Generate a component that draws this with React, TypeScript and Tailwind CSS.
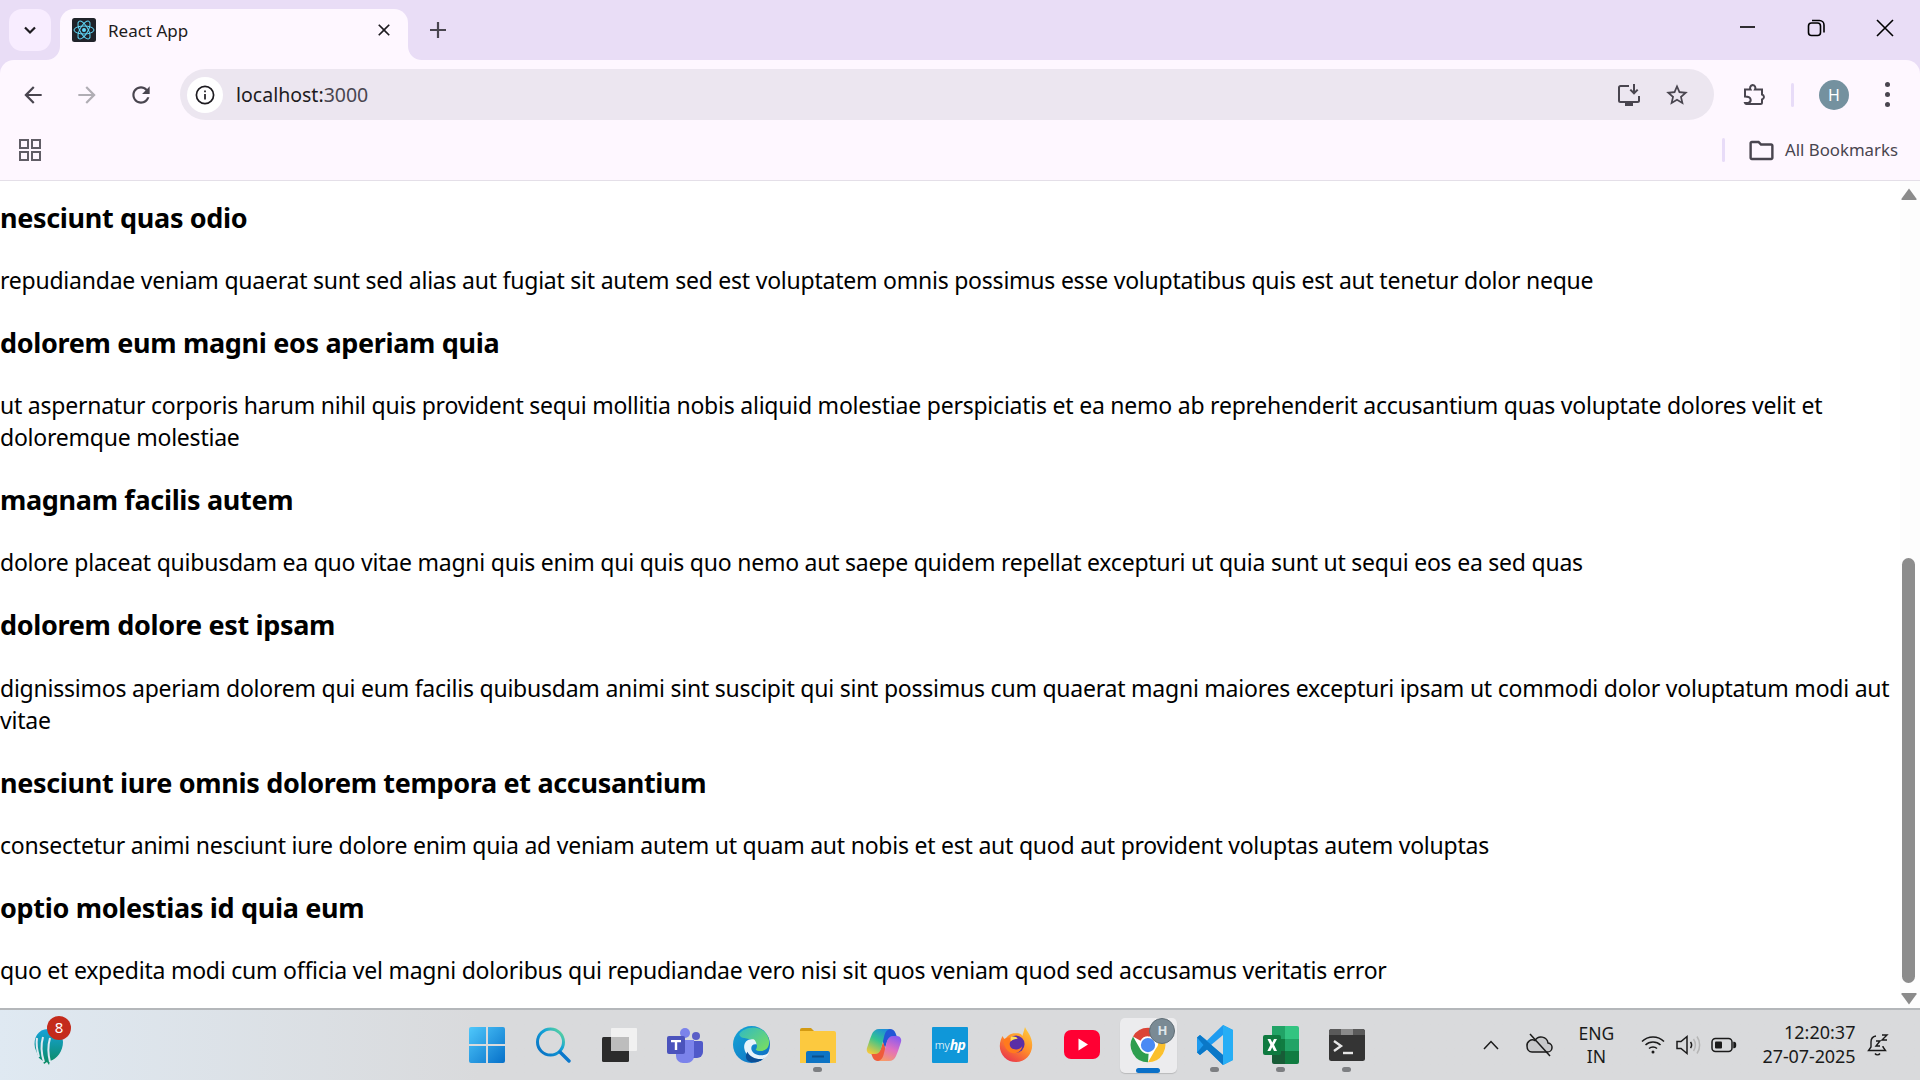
import type { ReactNode } from "react";

const posts: { title: string; body: ReactNode }[] = [
  {
    title: "nesciunt quas odio",
    body: "repudiandae veniam quaerat sunt sed alias aut fugiat sit autem sed est voluptatem omnis possimus esse voluptatibus quis est aut tenetur dolor neque",
  },
  {
    title: "dolorem eum magni eos aperiam quia",
    body: "ut aspernatur corporis harum nihil quis provident sequi mollitia nobis aliquid molestiae perspiciatis et ea nemo ab reprehenderit accusantium quas voluptate dolores velit et doloremque molestiae",
  },
  {
    title: "magnam facilis autem",
    body: "dolore placeat quibusdam ea quo vitae magni quis enim qui quis quo nemo aut saepe quidem repellat excepturi ut quia sunt ut sequi eos ea sed quas",
  },
  {
    title: "dolorem dolore est ipsam",
    body: "dignissimos aperiam dolorem qui eum facilis quibusdam animi sint suscipit qui sint possimus cum quaerat magni maiores excepturi ipsam ut commodi dolor voluptatum modi aut vitae",
  },
  {
    title: "nesciunt iure omnis dolorem tempora et accusantium",
    body: "consectetur animi nesciunt iure dolore enim quia ad veniam autem ut quam aut nobis et est aut quod aut provident voluptas autem voluptas",
  },
  {
    title: "optio molestias id quia eum",
    body: "quo et expedita modi cum officia vel magni doloribus qui repudiandae vero nisi sit quos veniam quod sed accusamus veritatis error",
  },
];

function Mat({ d, size = 24, className = "" }: { d: string; size?: number; className?: string }) {
  return (
    <svg width={size} height={size} viewBox="0 0 24 24" className={className} fill="currentColor">
      <path d={d} />
    </svg>
  );
}

const BACK = "M20 11H7.83l5.59-5.59L12 4l-8 8 8 8 1.41-1.41L7.83 13H20v-2z";
const FORWARD = "M4 11h12.17l-5.59-5.59L12 4l8 8-8 8-1.41-1.41L16.17 13H4v-2z";
const RELOAD =
  "M17.65 6.35C16.2 4.9 14.21 4 12 4c-4.42 0-7.99 3.58-7.99 8s3.57 8 7.99 8c3.73 0 6.84-2.55 7.73-6h-2.08c-.82 2.33-3.04 4-5.65 4-3.31 0-6-2.69-6-6s2.69-6 6-6c1.66 0 3.14.69 4.22 1.78L13 11h7V4l-2.35 2.35z";
const CLOSE =
  "M19 6.41 17.59 5 12 10.59 6.41 5 5 6.41 10.59 12 5 17.59 6.41 19 12 13.41 17.59 19 19 17.59 13.41 12z";
const STAR =
  "M22 9.24l-7.19-.62L12 2 9.19 8.63 2 9.24l5.46 4.73L5.82 21 12 17.27 18.18 21l-1.63-7.03L22 9.24zM12 15.4l-3.76 2.27 1-4.28-3.32-2.88 4.38-.38L12 6.1l1.71 4.04 4.38.38-3.32 2.88 1 4.28L12 15.4z";
const FOLDER =
  "M20 6h-8l-2-2H4c-1.1 0-2 .9-2 2v12c0 1.1.9 2 2 2h16c1.1 0 2-.9 2-2V8c0-1.1-.9-2-2-2zm0 12H4V6h5.17l2 2H20v10z";

function ReactFavicon() {
  return (
    <svg width="24" height="24" viewBox="0 0 24 24">
      <rect width="24" height="24" rx="2.5" fill="#20232a" />
      <g fill="none" stroke="#61dafb" strokeWidth="1">
        <ellipse cx="12" cy="12" rx="10" ry="4" />
        <ellipse cx="12" cy="12" rx="10" ry="4" transform="rotate(60 12 12)" />
        <ellipse cx="12" cy="12" rx="10" ry="4" transform="rotate(120 12 12)" />
      </g>
      <circle cx="12" cy="12" r="2" fill="#61dafb" />
    </svg>
  );
}

function Flare({ side }: { side: "left" | "right" }) {
  return side === "left" ? (
    <svg width="14" height="14" viewBox="0 0 14 14" className="absolute bottom-0 left-[-14px]">
      <path d="M14 0v14H0C8 14 14 8 14 0z" fill="#fef7ff" />
    </svg>
  ) : (
    <svg width="14" height="14" viewBox="0 0 14 14" className="absolute bottom-0 right-[-14px]">
      <path d="M0 0v14h14C6 14 0 8 0 0z" fill="#fef7ff" />
    </svg>
  );
}

function TabStrip() {
  return (
    <div className="flex h-[60px] shrink-0 items-start bg-[#e9ddf6] pl-[9px] pt-[9px]">
      <div className="flex h-[42px] w-[42px] items-center justify-center rounded-[13px] bg-[#f8edff] text-[#1d1b20]">
        <svg width="16" height="16" viewBox="0 0 16 16" fill="none" stroke="currentColor" strokeWidth="2.2">
          <path d="M3 5.5l5 5 5-5" />
        </svg>
      </div>
      <div className="relative ml-[9px] flex h-[51px] w-[348px] items-center rounded-t-[14px] bg-[#fef7ff] pb-[9px] pl-[12px] pr-[14px]">
        <Flare side="left" />
        <Flare side="right" />
        <ReactFavicon />
        <span className="ml-[12px] mt-[2px] flex-1 text-[17px] text-[#1d1b20]">React App</span>
        <Mat d={CLOSE} size={20} className="text-[#1d1b20]" />
      </div>
      <div className="ml-[16px] mt-[7px] text-[#49454f]">
        <svg width="28" height="28" viewBox="0 0 28 28" fill="none" stroke="currentColor" strokeWidth="2.2">
          <path d="M14 6v16M6 14h16" />
        </svg>
      </div>
      <div className="ml-auto mt-[9px] flex w-[183px] items-center text-black">
        <svg width="22" height="22" viewBox="0 0 22 22" fill="none" stroke="currentColor" strokeWidth="1.6" className="mt-[-4px]">
          <path d="M3 11h15" />
        </svg>
        <svg width="22" height="22" viewBox="0 0 22 22" fill="none" stroke="currentColor" strokeWidth="1.6" className="ml-[46px] mt-[-1px]">
          <rect x="3.5" y="6" width="12" height="12.5" rx="3" />
          <path d="M7 3.5h7.5a4.5 4.5 0 0 1 4.5 4.5v7.5" />
        </svg>
        <svg width="22" height="22" viewBox="0 0 22 22" fill="none" stroke="currentColor" strokeWidth="1.6" className="ml-[47px] mt-[-1px]">
          <path d="M3 3l16 16M19 3L3 19" />
        </svg>
      </div>
    </div>
  );
}

function Toolbar() {
  return (
    <div className="flex h-[60px] shrink-0 items-center rounded-t-[14px] bg-[#fef7ff] pl-[20px] pt-[9px]">
      <Mat d={BACK} size={26} className="text-[#49454f]" />
      <Mat d={FORWARD} size={26} className="ml-[28px] text-[#b0adb4]" />
      <Mat d={RELOAD} size={26} className="ml-[28px] text-[#49454f]" />
      <div className="ml-[26px] flex h-[51px] w-[1534px] items-center rounded-full bg-[#ece6f0] pl-[7px] pr-[24px]">
        <div className="flex h-[36px] w-[36px] items-center justify-center rounded-full bg-white text-[#1d1b20]">
          <svg width="20" height="20" viewBox="0 0 20 20" fill="none" stroke="currentColor" strokeWidth="1.7">
            <circle cx="10" cy="10" r="8.6" />
            <path d="M10 9v5.5M10 5.5v1.8" />
          </svg>
        </div>
        <span className="ml-[13px] flex-1 text-[19.5px] text-[#1d1b20]">
          localhost:<span className="text-[#49454f]">3000</span>
        </span>
        <svg width="26" height="26" viewBox="0 0 26 26" fill="none" stroke="#49454f" strokeWidth="2" className="mr-[22px]">
          <path d="M13 4H4.5A1.5 1.5 0 0 0 3 5.5v13A1.5 1.5 0 0 0 4.5 20h17a1.5 1.5 0 0 0 1.5-1.5V14" />
          <path d="M18 2v9M14.3 7.6L18 11.3l3.7-3.7" />
          <path d="M9 22.5h8" strokeWidth="3" />
        </svg>
        <Mat d={STAR} size={26} className="text-[#49454f]" />
      </div>
      <svg width="26" height="26" viewBox="0 0 26 26" fill="none" stroke="#49454f" strokeWidth="2" className="ml-[28px]">
        <path d="M3 7.5h5.5a3 3 0 0 1 2-4.5 3 3 0 0 1 2.5 4.5h7v5a3 3 0 0 1 2 2.5 3 3 0 0 1-2 2.5v3a1.5 1.5 0 0 1-1.5 1.500H4.500A1.500 1.500 0 0 1 3 21h3.500c2-1 2.500-2.500 2-4-.5-1.500-2.500-2.500-5.500-2.500z" />
      </svg>
      <div className="ml-[23px] h-[24px] w-[3px] rounded-full bg-[#e8dcf8]" />
      <div className="ml-[25px] flex h-[30px] w-[30px] items-center justify-center rounded-full bg-[#74919f] text-[16px] text-white">
        H
      </div>
      <div className="ml-[36px] flex flex-col gap-[5px]">
        <span className="h-[5px] w-[5px] rounded-full bg-[#49454f]" />
        <span className="h-[5px] w-[5px] rounded-full bg-[#49454f]" />
        <span className="h-[5px] w-[5px] rounded-full bg-[#49454f]" />
      </div>
    </div>
  );
}

function BookmarksBar() {
  return (
    <div className="flex h-[61px] shrink-0 items-center border-b border-[#e4dfe8] bg-[#fef7ff] pl-[19px]">
      <svg width="22" height="22" viewBox="0 0 22 22" fill="none" stroke="#605d66" strokeWidth="2">
        <rect x="1" y="1" width="8" height="8" />
        <rect x="13" y="1" width="8" height="8" />
        <rect x="1" y="13" width="8" height="8" />
        <rect x="13" y="13" width="8" height="8" />
      </svg>
      <div className="ml-auto h-[24px] w-[3px] rounded-full bg-[#e8dcf8]" />
      <Mat d={FOLDER} size={29} className="ml-[22px] text-[#49454f]" />
      <span className="ml-[9px] mr-[21px] w-[114px] whitespace-nowrap text-[16.8px] text-[#49454f]">All Bookmarks</span>
    </div>
  );
}

function Scrollbar() {
  return (
    <div className="flex w-[20px] shrink-0 flex-col items-center bg-[#fdfdfd] pr-[3px] pt-[7px]">
      <svg width="16" height="12" viewBox="0 0 16 12" fill="#8b8b8b" className="shrink-0">
        <path d="M8 .5l7.5 10.2c.3.6 0 1.3-.7 1.3H1.200c-.7 0-1-.7-.7-1.300z" />
      </svg>
      <div className="mt-[358px] h-[425px] w-[13px] shrink-0 rounded-[7px] bg-[#8c8c8c]" />
      <svg width="16" height="12" viewBox="0 0 16 12" fill="#8b8b8b" className="mt-[10px] shrink-0">
        <path d="M8 11.500L.5 1.300C.2.700.5 0 1.200 0h13.600c.7 0 1 .7.7 1.300z" />
      </svg>
    </div>
  );
}

function WindowsLogo() {
  return (
    <svg width="36" height="36" viewBox="0 0 36 36">
      <defs>
        <linearGradient id="win" x1="0" y1="0" x2="1" y2="1">
          <stop offset="0" stopColor="#4fc8fb" />
          <stop offset="1" stopColor="#0670c9" />
        </linearGradient>
      </defs>
      <path d="M2 0h15v17H0V2a2 2 0 0 1 2-2zM19 0h15a2 2 0 0 1 2 2v15H19zM0 19h17v17H2a2 2 0 0 1-2-2zM19 19h17v15a2 2 0 0 1-2 2H19z" fill="url(#win)" />
    </svg>
  );
}

function SearchIcon() {
  return (
    <svg width="36" height="36" viewBox="0 0 36 36" fill="none">
      <defs>
        <linearGradient id="srch" x1="0" y1="1" x2="1" y2="0">
          <stop offset="0" stopColor="#0669c1" />
          <stop offset="0.6" stopColor="#12a3d8" />
          <stop offset="1" stopColor="#6ee08e" />
        </linearGradient>
      </defs>
      <circle cx="15.500" cy="15" r="13" stroke="url(#srch)" strokeWidth="3" />
      <path d="M25 25l9 9" stroke="#0b78cc" strokeWidth="3.400" strokeLinecap="round" />
    </svg>
  );
}

function TaskViewIcon() {
  return (
    <svg width="36" height="36" viewBox="0 0 36 36">
      <rect x="1" y="10" width="27" height="25" rx="1.500" fill="#2b2b2b" />
      <rect x="10" y="1" width="26" height="23" rx="1" fill="#f4f4f4" fillOpacity="0.85" />
      <rect x="10" y="10" width="18" height="14" fill="#bdbdbd" />
    </svg>
  );
}

function TeamsIcon() {
  return (
    <svg width="38" height="36" viewBox="0 0 38 36">
      <circle cx="30" cy="9" r="4" fill="#5b5fc7" />
      <circle cx="19" cy="6" r="5" fill="#7b83eb" />
      <path d="M26 14h9a2 2 0 0 1 2 2v9a6 6 0 0 1-6 6h-5z" fill="#5059c9" />
      <path d="M10 13h18v16a7 7 0 0 1-7 7h-4a7 7 0 0 1-7-7z" fill="#7b83eb" />
      <rect x="1" y="9" width="18" height="18" rx="2" fill="#4b53bc" />
      <path d="M5 13h10v2.200h-3.800V23H8.800v-7.800H5z" fill="#fff" />
    </svg>
  );
}

function EdgeIcon() {
  return (
    <svg width="37" height="37" viewBox="0 0 36 36">
      <defs>
        <linearGradient id="edgeA" x1="0" y1="0" x2="1" y2="1">
          <stop offset="0" stopColor="#14a6d6" />
          <stop offset="1" stopColor="#0f6bc3" />
        </linearGradient>
        <linearGradient id="edgeB" x1="0" y1="0" x2="1" y2="1">
          <stop offset="0" stopColor="#2fb9c4" />
          <stop offset="1" stopColor="#7ee05a" />
        </linearGradient>
      </defs>
      <circle cx="18" cy="18" r="18" fill="url(#edgeA)" />
      <path d="M6 8C10 1 25-2 32 7c4 5 4 12 1 15-3 3-9 3-11 1 2-2 2-7-2-9-6-3-13-1-14-6z" fill="url(#edgeB)" />
      <path d="M20 13c-6-1-10 3-9 9 1 7 9 13 18 10 2-1 5-3 6-6-5 4-15 3-17-3-1-4 2-6 5-5-.5-2-1.500-4.500-3-5z" fill="#fff" fillOpacity="0.9" />
      <path d="M14 25c2 5 9 8 15 7-3 3-8 4-12 3-4-1-6-5-3-10z" fill="#0c4f96" />
    </svg>
  );
}

function ExplorerIcon() {
  return (
    <svg width="36" height="36" viewBox="0 0 36 36">
      <path d="M0 3a2 2 0 0 1 2-2h9l3 3h-14z" fill="#d39a12" />
      <path d="M0 4h34a2 2 0 0 1 2 2v30H0z" fill="#fcc93f" />
      <path d="M6 26a2 2 0 0 1 2-2h20a2 2 0 0 1 2 2v10H6z" fill="#0e74c4" />
      <rect x="12" y="28.500" width="12" height="2" fill="#0a4f8c" />
    </svg>
  );
}

function CopilotIcon() {
  return (
    <svg width="36" height="36" viewBox="0 0 36 36">
      <defs>
        <linearGradient id="copA" x1="0.7" y1="0" x2="0.2" y2="1">
          <stop offset="0" stopColor="#1f8fd6" />
          <stop offset="0.45" stopColor="#35c48f" />
          <stop offset="1" stopColor="#f5c93a" />
        </linearGradient>
        <linearGradient id="copB" x1="0.7" y1="0" x2="0.3" y2="1">
          <stop offset="0" stopColor="#8a5cf0" />
          <stop offset="0.5" stopColor="#e06fc0" />
          <stop offset="1" stopColor="#f79a6a" />
        </linearGradient>
      </defs>
      <path d="M13 2h11c2.500 0 4.500 1.500 5.500 4l1.500 4h-4c-3 0-5 2-6 5l-2 6-4-11z" fill="#2257d6" />
      <path d="M23 34H12c-2.500 0-4.500-1.500-5.500-4L5 26h4c3 0 5-2 6-5l2-6 4 11z" fill="#ef5b3a" />
      <path d="M13 2h11c-3 .5-4.500 3-5.500 6L15 22c-1 3-3 5-6 5H5c-3 0-5-3-4-6l3-9 2-5c1-3 4-5 7-5z" fill="url(#copA)" />
      <path d="M23 34H12c3-.5 4.500-3 5.500-6L21 14c1-3 3-5 6-5h4c3 0 5 3 4 6l-3 9-2 5c-1 3-4 5-7 5z" fill="url(#copB)" />
    </svg>
  );
}

function MyHpIcon() {
  return (
    <div className="flex h-[36px] w-[36px] items-center justify-center rounded-[1px] bg-[#0f97d9] leading-none text-white">
      <span className="text-[11px] font-light">my</span>
      <span className="text-[14px] font-bold italic tracking-[-0.5px]">hp</span>
    </div>
  );
}

function FirefoxIcon() {
  return (
    <svg width="34" height="36" viewBox="0 0 36 40">
      <defs>
        <linearGradient id="ffA" x1="0.8" y1="0" x2="0.2" y2="1">
          <stop offset="0" stopColor="#ffc83a" />
          <stop offset="0.5" stopColor="#ff8a2a" />
          <stop offset="1" stopColor="#e8304f" />
        </linearGradient>
      </defs>
      <path d="M28 0c2 5 8 10 8 20 0 11-8 19-18 19S0 31 0 21c0-5 2-9 3-11 1 2 2 3 3 4 2-4 6-7 11-7 4 0 7 0 8 3 1-3 2-6 3-10z" fill="url(#ffA)" />
      <circle cx="18" cy="19" r="9.500" fill="#5b2ea6" />
      <path d="M4 14c4-3 9-3 11 0-2 1-4 2-4 5 0 4 3 6 7 6 3 0 6-2 7-4-1 6-6 9-11 8-6-1-10-8-10-15z" fill="#ff7a1e" />
      <path d="M12 11c3-1 7 0 8 2-3 0-6 1-8 3z" fill="#ffdc5a" />
    </svg>
  );
}

function YouTubeIcon() {
  return (
    <svg width="36" height="29" viewBox="0 0 36 29">
      <rect width="36" height="29" rx="7" fill="#ff0033" />
      <path d="M14.500 8.500L24 14.500l-9.500 6z" fill="#fff" />
    </svg>
  );
}

function ChromeIcon() {
  return (
    <svg width="36" height="36" viewBox="0 0 48 48">
      <circle cx="24" cy="24" r="23" fill="#fff" />
      <path d="M24 1a23 23 0 0 1 20 11.500H24a11.500 11.500 0 0 0-10 5.800L4 12.500A23 23 0 0 1 24 1z" fill="#db4437" />
      <path d="M44 12.500A23 23 0 0 1 24 47l10-17.500a11.500 11.500 0 0 0 0-17z" fill="#fbc02d" />
      <path d="M24 47A23 23 0 0 1 4 12.500l10 17.500a11.500 11.500 0 0 0 10.800 5.500z" fill="#2e9e4f" />
      <circle cx="24" cy="24" r="9.500" fill="#4a8af4" />
    </svg>
  );
}

function VsCodeIcon() {
  return (
    <svg width="36" height="40" viewBox="0 0 36 40">
      <path d="M26 0l10 5v30l-10 5-16-15.500L3 30l-3-2.500V12.500L3 10l7 5.500z" fill="#1f9cf0" />
      <path d="M26 0l10 5v30l-10 5z" fill="#27aef5" />
      <path d="M26 10L14 20l12 10z" fill="#d9dadc" />
      <path d="M0 12.500L3 10l23 20v10L10 24.500 3 30l-3-2.500L6.500 20z" fill="#0a78c8" />
    </svg>
  );
}

function ExcelIcon() {
  return (
    <svg width="36" height="38" viewBox="0 0 36 38">
      <path d="M9 0h13v13H9z" fill="#21a366" />
      <path d="M22 0h12a2 2 0 0 1 2 2v11H22z" fill="#33c481" />
      <path d="M9 13h13v12H9z" fill="#107c41" />
      <path d="M22 13h14v12H22z" fill="#21a366" />
      <path d="M9 25h13v13h-11a2 2 0 0 1-2-2z" fill="#185c37" />
      <path d="M22 25h14v11a2 2 0 0 1-2 2H22z" fill="#107c41" />
      <rect x="0" y="9" width="18" height="20" rx="2" fill="#0f7a40" />
      <path d="M4.500 13h3l1.800 3.600L11 13h3l-3 5.800L14 25h-3l-1.800-3.700L7.400 25h-3l3-6.100z" fill="#fff" />
    </svg>
  );
}

function TerminalIcon() {
  return (
    <svg width="36" height="32" viewBox="0 0 36 32">
      <rect width="36" height="32" rx="2.500" fill="#343434" />
      <path d="M0 2.500A2.500 2.500 0 0 1 2.500 0H12v6H0z" fill="#5a5a5a" />
      <rect x="12" y="0" width="12" height="6" fill="#8a8a8a" />
      <path d="M24 0h9.500A2.500 2.500 0 0 1 36 2.500V6H24z" fill="#5a5a5a" />
      <path d="M5 12l7 5-7 5" fill="none" stroke="#e6e6e6" strokeWidth="2.400" />
      <path d="M14 24h10" stroke="#e6e6e6" strokeWidth="2.400" />
    </svg>
  );
}

function Dock({ children, running, active }: { children: ReactNode; running?: boolean; active?: boolean }) {
  return (
    <div className="relative flex h-[67px] w-[66.15px] items-center justify-center">
      {active && <div className="absolute bottom-[5px] left-[5px] right-[5px] top-[7px] rounded-[5px] bg-[#ececee] shadow-[0_1px_1px_rgba(0,0,0,0.15)]" />}
      <div className="relative flex">{children}</div>
      {running && <div className="absolute bottom-[6px] h-[5px] w-[9px] rounded-full bg-[#7d7f82]" />}
      {active && <div className="absolute bottom-[5px] h-[5px] w-[24px] rounded-full bg-[#0a70c8]" />}
    </div>
  );
}

function Taskbar() {
  return (
    <div className="flex h-[72px] shrink-0 items-center border-t-2 border-[#b4b7ba] bg-gradient-to-r from-[#dfe9f2] via-[#d9dadc] via-25% to-[#d9dadc] pb-[1px] text-[#1a1a1a]">
      <div className="relative ml-[32px] w-[422px]">
        <svg width="32" height="42" viewBox="0 0 32 42" className="mt-[4px]">
          <defs>
            <linearGradient id="cric" x1="0" y1="0" x2="0" y2="1">
              <stop offset="0" stopColor="#16a3dc" />
              <stop offset="1" stopColor="#0b8a5e" />
            </linearGradient>
          </defs>
          <path d="M16 3c9 0 15 6 15 13 0 9-6 17-13 19l-1 4-2-3-3 2-1-3-4-3-4-10C1 12 6 3 16 3z" fill="url(#cric)" />
          <path d="M5 12C4 18 5 24 7 31M11 11C9 18 9 27 12 36M18 12c-2 7-2 16 0 24" fill="none" stroke="#dfe9f2" strokeWidth="2" />
        </svg>
        <div className="absolute left-[15px] top-[-6px] flex h-[24px] w-[24px] items-center justify-center rounded-full bg-[#c42b1c] text-[15px] text-white">
          8
        </div>
      </div>
      <Dock><WindowsLogo /></Dock>
      <Dock><SearchIcon /></Dock>
      <Dock><TaskViewIcon /></Dock>
      <Dock><TeamsIcon /></Dock>
      <Dock><EdgeIcon /></Dock>
      <Dock running><ExplorerIcon /></Dock>
      <Dock><CopilotIcon /></Dock>
      <Dock><MyHpIcon /></Dock>
      <Dock><FirefoxIcon /></Dock>
      <Dock><YouTubeIcon /></Dock>
      <Dock active>
        <ChromeIcon />
        <div className="absolute right-[-9px] top-[-9px] flex h-[26px] w-[26px] items-center justify-center rounded-full border border-[#5f6d75] bg-[#7a8a94] text-[13px] font-bold text-[#dfe6ea]">
          H
        </div>
      </Dock>
      <Dock running><VsCodeIcon /></Dock>
      <Dock running><ExcelIcon /></Dock>
      <Dock running><TerminalIcon /></Dock>

      <svg width="18" height="12" viewBox="0 0 18 12" fill="none" stroke="#1a1a1a" strokeWidth="1.500" className="ml-[102px]">
        <path d="M2 10l7-7.500 7 7.500" />
      </svg>
      <svg width="28" height="24" viewBox="0 0 28 24" fill="none" stroke="#1a1a1a" strokeWidth="1.500" className="ml-[25px]">
        <path d="M7 19h15a4.500 4.500 0 0 0 1-9 7 7 0 0 0-13-2.500A5.500 5.500 0 0 0 2 13c0 3.500 2 6 5 6z" fill="#c8c9cb" />
        <path d="M5 1l20 22" />
      </svg>
      <div className="ml-[13.5px] w-[60px] text-center text-[17.5px] leading-[23px]">
        <div>ENG</div>
        <div>IN</div>
      </div>
      <svg width="24" height="20" viewBox="0 0 24 20" fill="none" stroke="#1a1a1a" strokeWidth="1.500" className="ml-[15px]">
        <path d="M1 6.500c6-6 16-6 22 0M4.500 10c4-4 11-4 15 0M8 13.500c2.200-2 5.800-2 8 0" />
        <circle cx="12" cy="17" r="1.500" fill="#1a1a1a" stroke="none" />
      </svg>
      <svg width="26" height="22" viewBox="0 0 26 22" fill="none" stroke="#1a1a1a" strokeWidth="1.500" className="ml-[10px]">
        <path d="M2 7.500v7h4l6 5V2.500l-6 5z" />
        <path d="M15.500 8c1.500 2 1.500 4 0 6" />
        <path d="M18.500 5c2.500 3.500 2.500 8.500 0 12M22 2.500c3.500 5 3.500 12 0 17" stroke="#b5b5b5" />
      </svg>
      <svg width="26" height="16" viewBox="0 0 26 16" fill="none" stroke="#1a1a1a" strokeWidth="1.500" className="ml-[10px]">
        <rect x="1" y="1.500" width="20" height="13" rx="3.500" />
        <rect x="4" y="4.500" width="7" height="7" rx="1" fill="#1a1a1a" stroke="none" />
        <path d="M23 5.500c2 0 2 5 0 5z" fill="#1a1a1a" />
      </svg>
      <div className="ml-[18px] mt-[-2px] w-[100px] text-right text-[18px] leading-[24px]">
        <div>12:20:37</div>
        <div className="tracking-[-0.1px]">27-07-2025</div>
      </div>
      <svg width="22" height="24" viewBox="0 0 22 24" fill="none" stroke="#1a1a1a" strokeWidth="1.400" className="ml-[12px]">
        <path d="M9 3C5.500 3.500 4 6 4 9v5l-2.500 3.500h17L16 14v-1" />
        <path d="M8 20.500a3 3 0 0 0 5 0" />
        <path d="M9 8h4l-4 5h4M15 2h5l-5 5h5" />
      </svg>
    </div>
  );
}

export default function App() {
  return (
    <div className="flex h-screen w-screen flex-col overflow-hidden bg-[#e9ddf6] font-['Noto_Sans','Open_Sans',sans-serif]">
      <TabStrip />
      <Toolbar />
      <BookmarksBar />
      <div className="flex min-h-0 flex-1 bg-white">
        <main className="min-w-0 flex-1 overflow-hidden pt-[18px] text-black">
          {posts.map((post) => (
            <div key={post.title}>
              <h3 className="mb-[28.08px] text-[27px] font-bold leading-[37px] tracking-[-0.33px]">{post.title}</h3>
              <p className="mb-[28.08px] text-[23px] leading-[32px] tracking-[-0.23px]">{post.body}</p>
            </div>
          ))}
        </main>
        <Scrollbar />
      </div>
      <Taskbar />
    </div>
  );
}
